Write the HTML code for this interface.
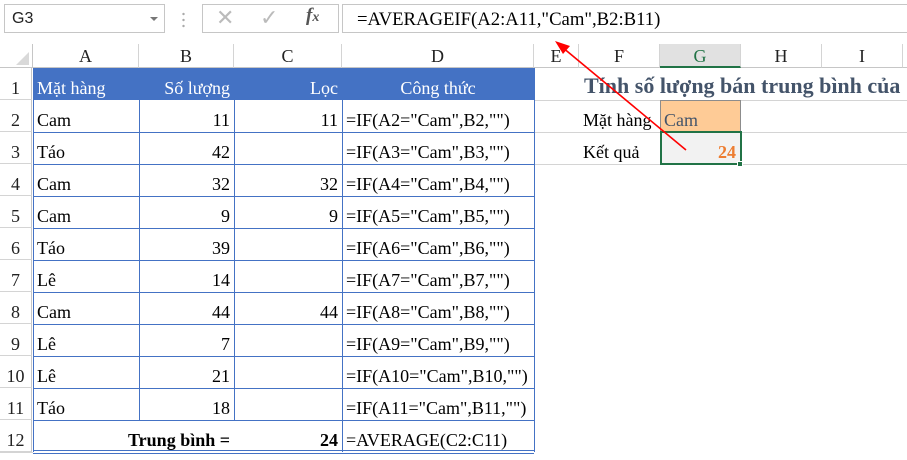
<!DOCTYPE html><html><head><meta charset="utf-8"><style>
*{margin:0;padding:0;box-sizing:border-box}
body{width:907px;height:460px;background:#fff;position:relative;overflow:hidden;font-family:"Liberation Serif",serif;font-size:18px;color:#000}
.a{position:absolute;white-space:nowrap}
.ch{position:absolute;top:44px;height:24px;border-right:1px solid #d4d4d4;border-bottom:1px solid #c6c6c6;background:#fff;text-align:center;line-height:25px;font-size:18px;color:#222}
.rh{position:absolute;left:0;width:32px;height:32px;border-bottom:1px solid #d4d4d4;border-right:1px solid #c6c6c6;text-align:center;line-height:40px;font-size:18px;color:#222}
.c{position:absolute;height:32px;line-height:40px;padding:0 4px;font-size:18px}
.r{text-align:right}
</style></head><body>
<div class="a" style="left:4px;top:4px;width:161px;height:29px;border:1px solid #c6c6c6;padding-left:7px;line-height:28px;font-family:'Liberation Sans',sans-serif;font-size:16px;color:#222">G3</div>
<div class="a" style="left:150px;top:17px;width:0;height:0;border-left:4px solid transparent;border-right:4px solid transparent;border-top:4px solid #777"></div>
<div class="a" style="left:182px;top:11px;width:3px;height:18px;background:radial-gradient(circle,#aaa 1px,transparent 1.4px) 0 0/3px 6px"></div>
<div class="a" style="left:202px;top:4px;width:137px;height:29px;border:1px solid #c6c6c6"></div>
<div class="a" style="left:216px;top:6px;font-size:22px;color:#bbb;font-family:'DejaVu Sans',sans-serif">✕</div>
<div class="a" style="left:260px;top:6px;font-size:22px;color:#bbb;font-family:'DejaVu Sans',sans-serif">✓</div>
<div class="a" style="left:306px;top:5px;font-size:19px;color:#555;font-style:italic;font-weight:bold">f<span style="font-size:14px">x</span></div>
<div class="a" style="left:342px;top:4px;width:570px;height:29px;border:1px solid #c6c6c6;padding-left:14px;line-height:29px;font-size:18.7px">=AVERAGEIF(A2:A11,"Cam",B2:B11)</div>
<div class="a" style="left:0;top:44px;width:33px;height:24px;border-right:1px solid #c6c6c6;border-bottom:1px solid #c6c6c6"></div>
<div class="a" style="left:16px;top:52px;width:0;height:0;border-left:13px solid transparent;border-bottom:13px solid #d9d9d9"></div>
<div class="ch" style="left:33px;width:106px">A</div>
<div class="ch" style="left:139px;width:95px">B</div>
<div class="ch" style="left:234px;width:108px">C</div>
<div class="ch" style="left:342px;width:192px">D</div>
<div class="ch" style="left:534px;width:45px">E</div>
<div class="ch" style="left:579px;width:81px">F</div>
<div class="ch" style="left:660px;width:81px;background:#e1e1e1;color:#217346;border-bottom:2px solid #217346">G</div>
<div class="ch" style="left:741px;width:81px">H</div>
<div class="ch" style="left:822px;width:81px">I</div>
<div class="ch" style="left:903px;width:10px"></div>
<div class="a" style="left:33px;top:68px;width:501px;height:32px;background:#4472c4"></div>
<div class="c" style="left:33px;top:68px;width:106px;color:#fff">Mặt hàng</div>
<div class="c r" style="left:139px;top:68px;width:95px;color:#fff">Số lượng</div>
<div class="c r" style="left:234px;top:68px;width:108px;color:#fff">Lọc</div>
<div class="c" style="left:342px;top:68px;width:192px;color:#fff;text-align:center">Công thức</div>
<svg class="a" style="left:0;top:0" width="907" height="460">
<g stroke="#d4d4d4" stroke-width="1">
<line x1="0" y1="452.5" x2="33" y2="452.5"/>
<line x1="534" y1="100.5" x2="907" y2="100.5"/><line x1="534" y1="132.5" x2="907" y2="132.5"/><line x1="534" y1="164.5" x2="907" y2="164.5"/>
</g>
<g stroke="#4472c4" stroke-width="1" fill="none">
<path d="M33.5 100V452M139.5 100V420M234.5 100V420M342.5 100V452M534.5 68V452"/>
<path d="M33 132.5H534M33 164.5H534M33 196.5H534M33 228.5H534M33 260.5H534M33 292.5H534M33 324.5H534M33 356.5H534M33 388.5H534M33 420.5H534M33 450.5H534M33 453.5H534"/>
</g>
</svg>
<div class="rh" style="top:68px">1</div><div class="rh" style="top:100px">2</div><div class="rh" style="top:132px">3</div><div class="rh" style="top:164px">4</div><div class="rh" style="top:196px">5</div><div class="rh" style="top:228px">6</div><div class="rh" style="top:260px">7</div><div class="rh" style="top:292px">8</div><div class="rh" style="top:324px">9</div><div class="rh" style="top:356px">10</div><div class="rh" style="top:388px">11</div><div class="rh" style="top:420px">12</div>
<div class="c" style="left:33px;top:100px">Cam</div><div class="c r" style="left:139px;top:100px;width:95px">11</div><div class="c r" style="left:234px;top:100px;width:108px">11</div><div class="c" style="left:342px;top:100px">=IF(A2="Cam",B2,"")</div>
<div class="c" style="left:33px;top:132px">Táo</div><div class="c r" style="left:139px;top:132px;width:95px">42</div><div class="c" style="left:342px;top:132px">=IF(A3="Cam",B3,"")</div>
<div class="c" style="left:33px;top:164px">Cam</div><div class="c r" style="left:139px;top:164px;width:95px">32</div><div class="c r" style="left:234px;top:164px;width:108px">32</div><div class="c" style="left:342px;top:164px">=IF(A4="Cam",B4,"")</div>
<div class="c" style="left:33px;top:196px">Cam</div><div class="c r" style="left:139px;top:196px;width:95px">9</div><div class="c r" style="left:234px;top:196px;width:108px">9</div><div class="c" style="left:342px;top:196px">=IF(A5="Cam",B5,"")</div>
<div class="c" style="left:33px;top:228px">Táo</div><div class="c r" style="left:139px;top:228px;width:95px">39</div><div class="c" style="left:342px;top:228px">=IF(A6="Cam",B6,"")</div>
<div class="c" style="left:33px;top:260px">Lê</div><div class="c r" style="left:139px;top:260px;width:95px">14</div><div class="c" style="left:342px;top:260px">=IF(A7="Cam",B7,"")</div>
<div class="c" style="left:33px;top:292px">Cam</div><div class="c r" style="left:139px;top:292px;width:95px">44</div><div class="c r" style="left:234px;top:292px;width:108px">44</div><div class="c" style="left:342px;top:292px">=IF(A8="Cam",B8,"")</div>
<div class="c" style="left:33px;top:324px">Lê</div><div class="c r" style="left:139px;top:324px;width:95px">7</div><div class="c" style="left:342px;top:324px">=IF(A9="Cam",B9,"")</div>
<div class="c" style="left:33px;top:356px">Lê</div><div class="c r" style="left:139px;top:356px;width:95px">21</div><div class="c" style="left:342px;top:356px">=IF(A10="Cam",B10,"")</div>
<div class="c" style="left:33px;top:388px">Táo</div><div class="c r" style="left:139px;top:388px;width:95px">18</div><div class="c" style="left:342px;top:388px">=IF(A11="Cam",B11,"")</div>
<div class="c r" style="left:33px;top:420px;width:201px;font-weight:bold">Trung bình =</div><div class="c r" style="left:234px;top:420px;width:108px;font-weight:bold">24</div><div class="c" style="left:342px;top:420px">=AVERAGE(C2:C11)</div>
<div class="a" style="left:584px;top:73px;font-size:22px;font-weight:bold;color:#44546a">Tính số lượng bán trung bình của</div>
<div class="a" style="left:660px;top:100px;width:81px;height:32px;background:#fecb96;border:1px solid #8c8c8c;border-bottom:none"></div>
<div class="c" style="left:579px;top:100px">Mặt hàng</div>
<div class="c" style="left:660px;top:100px;color:#44546a">Cam</div>
<div class="c" style="left:579px;top:132px">Kết quả</div>
<div class="a" style="left:660px;top:131px;width:82px;height:34px;background:#f2f2f2;border:2px solid #217346"></div>
<div class="a" style="left:737px;top:161px;width:6px;height:6px;background:#217346;border:1px solid #fff"></div>
<div class="c r" style="left:660px;top:132px;width:80px;font-weight:bold;color:#ed7d31">24</div>
<svg class="a" style="left:0;top:0" width="907" height="460">
<line x1="686" y1="150" x2="562" y2="47" stroke="#f00" stroke-width="1.6"/>
<polygon points="555,41 570,46 563,54" fill="#f00"/>
</svg>
</body></html>
